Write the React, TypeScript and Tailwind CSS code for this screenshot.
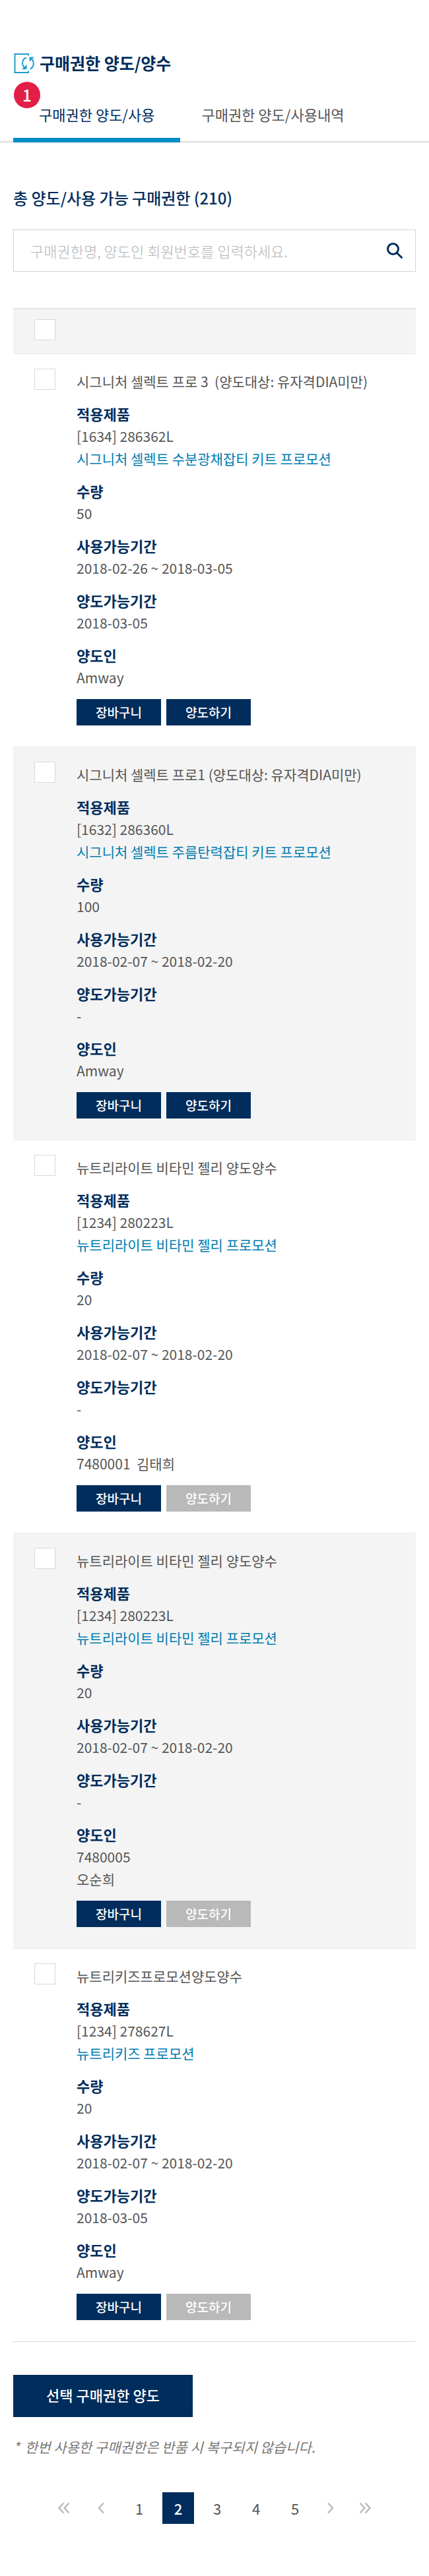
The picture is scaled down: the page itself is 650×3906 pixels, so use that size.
import { useState } from "react";
import type { ReactNode } from "react";

type Item = {
  title: string;
  code: string;
  promo: string;
  qty: string;
  usePeriod: string;
  transferPeriod: string;
  owner: string[];
  transferable: boolean;
};

const items: Item[] = [
  {
    title: "시그니처 셀렉트 프로 3  (양도대상: 유자격DIA미만)",
    code: "[1634] 286362L",
    promo: "시그니처 셀렉트 수분광채잡티 키트 프로모션",
    qty: "50",
    usePeriod: "2018-02-26 ~ 2018-03-05",
    transferPeriod: "2018-03-05",
    owner: ["Amway"],
    transferable: true,
  },
  {
    title: "시그니처 셀렉트 프로1 (양도대상: 유자격DIA미만)",
    code: "[1632] 286360L",
    promo: "시그니처 셀렉트 주름탄력잡티 키트 프로모션",
    qty: "100",
    usePeriod: "2018-02-07 ~ 2018-02-20",
    transferPeriod: "-",
    owner: ["Amway"],
    transferable: true,
  },
  {
    title: "뉴트리라이트 비타민 젤리 양도양수",
    code: "[1234] 280223L",
    promo: "뉴트리라이트 비타민 젤리 프로모션",
    qty: "20",
    usePeriod: "2018-02-07 ~ 2018-02-20",
    transferPeriod: "-",
    owner: ["7480001  김태희"],
    transferable: false,
  },
  {
    title: "뉴트리라이트 비타민 젤리 양도양수",
    code: "[1234] 280223L",
    promo: "뉴트리라이트 비타민 젤리 프로모션",
    qty: "20",
    usePeriod: "2018-02-07 ~ 2018-02-20",
    transferPeriod: "-",
    owner: ["7480005", "오순희"],
    transferable: false,
  },
  {
    title: "뉴트리키즈프로모션양도양수",
    code: "[1234] 278627L",
    promo: "뉴트리키즈 프로모션",
    qty: "20",
    usePeriod: "2018-02-07 ~ 2018-02-20",
    transferPeriod: "2018-03-05",
    owner: ["Amway"],
    transferable: false,
  },
];

function TransferIcon() {
  return (
    <svg width="34" height="34" viewBox="0 0 34 34" fill="none" stroke="#1f9dd0" strokeWidth="2" aria-hidden="true">
      <path d="M23 5.500V3H2.500v28H23v-2.500" />
      <path d="M20 8.500c-6.500 2-8 9.500-3 15" />
      <path d="M25.500 25.500c6-2.500 7-10.500 2.500-15" />
      <path d="M13 26h7.500v-7z" fill="#1f9dd0" stroke="none" />
      <path d="M24.500 7.500H32l-7.500 7z" fill="#1f9dd0" stroke="none" />
    </svg>
  );
}

function SearchIcon() {
  return (
    <svg width="26" height="26" viewBox="0 0 26 26" fill="none" stroke="#002d5c" strokeWidth="3" aria-hidden="true">
      <circle cx="10.500" cy="10.500" r="8" />
      <path d="M16 16l7.500 7.500" strokeLinecap="round" />
    </svg>
  );
}

function Arrow({ double = false, flip = false }: { double?: boolean; flip?: boolean }) {
  return (
    <svg
      width="20"
      height="18"
      viewBox="0 0 20 18"
      fill="none"
      stroke="#bababa"
      strokeWidth="2.500"
      className={flip ? "-scale-x-100" : undefined}
      aria-hidden="true"
    >
      {double ? <path d="M9.500 1.500L2.500 9l7 7.500M17.500 1.500l-7 7.500 7 7.500" /> : <path d="M13 1.500L6 9l7 7.500" />}
    </svg>
  );
}

function Check({ id, label }: { id: string; label: string }) {
  return (
    <input
      id={id}
      type="checkbox"
      aria-label={label}
      className="size-8 shrink-0 appearance-none border border-[#d9d9d9] bg-white checked:bg-[#002d5c]"
    />
  );
}

function Field({ label, children }: { label: string; children: ReactNode }) {
  return (
    <div>
      <dt className="text-[22px] font-bold text-[#002d5c]">{label}</dt>
      {children}
    </div>
  );
}

function ItemRow({ item, index }: { item: Item; index: number }) {
  const id = `item-${index}`;
  return (
    <li className="flex gap-8 border-b border-[#ebebeb] px-8 pt-[22px] pb-8 text-[21px] leading-[34px] text-[#555] last:border-[#dcdcdc] even:bg-[#f4f4f4]">
      <Check id={id} label={item.title} />
      <div className="flex min-w-0 flex-1 flex-col gap-[15px] pt-0.5">
        <label htmlFor={id} className="whitespace-pre-wrap">
          {item.title}
        </label>
        <dl className="flex flex-col gap-[15px]">
          <Field label="적용제품">
            <dd>{item.code}</dd>
            <dd>
              <a href="#promo" className="text-[#007cb0]">
                {item.promo}
              </a>
            </dd>
          </Field>
          <Field label="수량">
            <dd>{item.qty}</dd>
          </Field>
          <Field label="사용가능기간">
            <dd>{item.usePeriod}</dd>
          </Field>
          <Field label="양도가능기간">
            <dd>{item.transferPeriod}</dd>
          </Field>
          <Field label="양도인">
            {item.owner.map((line) => (
              <dd key={line} className="whitespace-pre-wrap">
                {line}
              </dd>
            ))}
          </Field>
        </dl>
        <div className="flex gap-2 pt-px text-[19px] leading-10 font-medium text-white">
          <button type="button" className="h-10 w-32 bg-[#002d5c]">
            장바구니
          </button>
          <button type="button" disabled={!item.transferable} className="h-10 w-32 bg-[#002d5c] disabled:bg-[#b9b9b9]">
            양도하기
          </button>
        </div>
      </div>
    </li>
  );
}

export default function App() {
  const [page, setPage] = useState(2);
  return (
    <main className="bg-white pt-[76px] pb-[79px] font-['Noto_Sans_CJK_KR',sans-serif] text-[22px] text-[#555]">
      <h1 className="flex h-10 items-center gap-1.5 px-5 text-[25px] font-bold text-[#002d5c]">
        <TransferIcon />
        구매권한 양도/양수
      </h1>

      <nav className="relative mt-[22px] flex h-[78px] border-b-2 border-[#dedede] px-5">
        <span className="absolute top-[-14px] left-[21px] flex size-10 items-center justify-center rounded-full bg-[#e21e48] text-[25px] font-medium text-white">
          1
        </span>
        <a
          href="#transfer"
          aria-current="page"
          className="-mb-0.5 h-[78px] border-b-[7px] border-[#0090c8] px-[39px] pt-[18px] leading-[34px] text-[#002d5c]"
        >
          구매권한 양도/사용
        </a>
        <a href="#history" className="px-8 pt-[18px] leading-[34px]">
          구매권한 양도/사용내역
        </a>
      </nav>

      <div className="px-5">
        <h2 className="mt-[66px] text-[24px] leading-9 font-medium text-[#002d5c]">총 양도/사용 가능 구매권한 (210)</h2>

        <form className="mt-[30px] flex h-16 items-center border border-[#d4d4d4] pr-[18px]" onSubmit={(e) => e.preventDefault()}>
          <input
            type="search"
            aria-label="구매권한 검색"
            placeholder="구매권한명, 양도인 회원번호를 입력하세요."
            className="h-full min-w-0 flex-1 px-[25px] font-light outline-none placeholder:text-[#b4b4b4]"
          />
          <button type="submit" aria-label="검색">
            <SearchIcon />
          </button>
        </form>

        <div className="mt-[55px] flex h-[70px] border-t-2 border-b border-t-[#e4e4e4] border-b-[#ebebeb] bg-[#f4f4f4] px-8 pt-[15px]">
          <Check id="item-all" label="전체 선택" />
        </div>
        <ul>
          {items.map((item, index) => (
            <ItemRow key={index} item={item} index={index} />
          ))}
        </ul>

        <button type="button" className="mt-[50px] h-16 w-68 bg-[#002d5c] pb-1 font-medium text-white">
          선택 구매권한 양도
        </button>
        <p className="mt-7 flex gap-2 text-[21px] leading-[34px] text-[#777] italic">
          <span>*</span>
          한번 사용한 구매권한은 반품 시 복구되지 않습니다.
        </p>

        <nav aria-label="페이지" className="mt-[52px] flex justify-center gap-[11px]">
          <button type="button" aria-label="처음" className="flex h-12 w-12 items-center justify-center">
            <Arrow double />
          </button>
          <button type="button" aria-label="이전" className="flex h-12 w-11 items-center justify-center">
            <Arrow />
          </button>
          {[1, 2, 3, 4, 5].map((n) => (
            <button
              key={n}
              type="button"
              onClick={() => setPage(n)}
              aria-current={n === page ? "page" : undefined}
              className={n === page ? "size-12 bg-[#002d5c] font-medium text-white" : "size-12"}
            >
              {n}
            </button>
          ))}
          <button type="button" aria-label="다음" className="flex h-12 w-9 items-center justify-center">
            <Arrow flip />
          </button>
          <button type="button" aria-label="마지막" className="flex h-12 w-12 items-center justify-center">
            <Arrow double flip />
          </button>
        </nav>
      </div>
    </main>
  );
}
